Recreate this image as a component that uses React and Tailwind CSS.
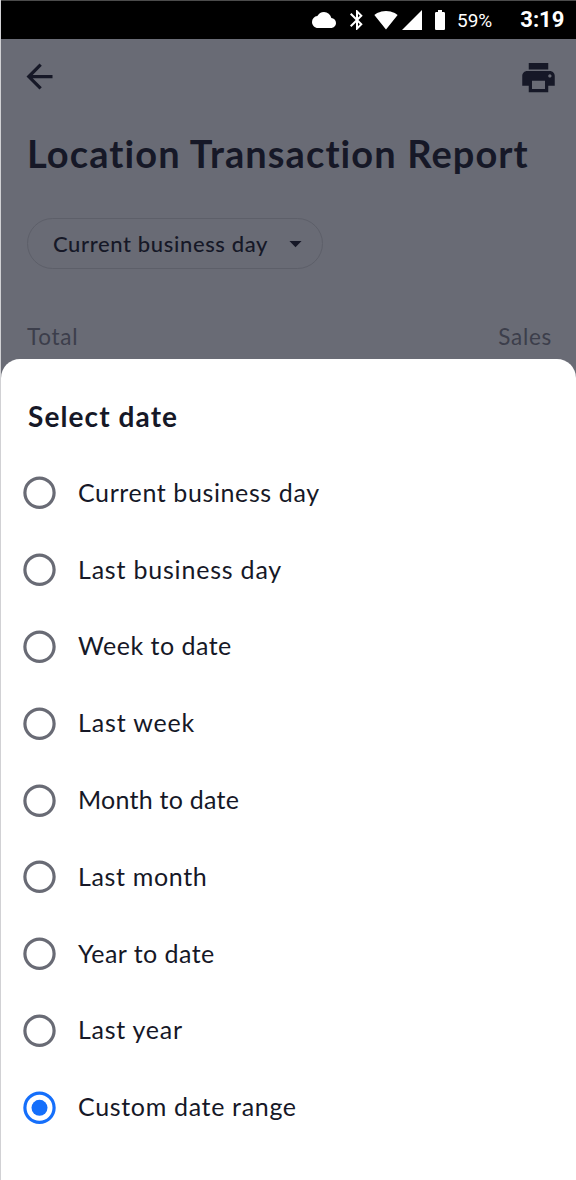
import React, { useState } from "react";
import clsx from "clsx";
import {
  MdArrowBack,
  MdArrowDropDown,
  MdBatteryFull,
  MdBluetooth,
  MdCloud,
  MdPrint,
  MdSignalCellular4Bar,
  MdSignalWifi4Bar,
} from "react-icons/md";

const options = [
  { label: "Current business day", tracking: "tracking-[0.61px]" },
  { label: "Last business day", tracking: "tracking-[0.8px]" },
  { label: "Week to date", tracking: "tracking-[0.5px]" },
  { label: "Last week", tracking: "tracking-[0.85px]" },
  { label: "Month to date", tracking: "tracking-[0.25px]" },
  { label: "Last month", tracking: "tracking-[0.66px]" },
  { label: "Year to date", tracking: "tracking-[0.45px]" },
  { label: "Last year", tracking: "tracking-[0.75px]" },
  { label: "Custom date range", tracking: "tracking-[0.67px]" },
];

function StatusBar() {
  return (
    <div className="flex h-[39px] items-center border-t border-[#4b4b4b] bg-black pl-[311px] font-[Roboto,sans-serif] text-white">
      <MdCloud className="size-6 shrink-0" />
      <MdBluetooth className="ml-[9px] size-6 shrink-0" />
      <MdSignalWifi4Bar className="ml-[5px] size-6 shrink-0" />
      <MdSignalCellular4Bar className="ml-[2px] size-6 shrink-0" />
      <MdBatteryFull className="ml-1 size-6 shrink-0" />
      <span className="ml-[5px] pt-px text-[19px] leading-none">59%</span>
      <span className="ml-[28px] text-[22px] leading-none font-bold">3:19</span>
    </div>
  );
}

function Report() {
  return (
    <div className="h-[320px] px-[26px] text-[#161827]">
      <div className="-mr-[8px] -ml-[7px] flex h-[76px] items-center justify-between">
        <MdArrowBack className="mb-[2px] size-[39px]" />
        <MdPrint className="size-[39px]" />
      </div>
      <h1 className="h-[76px] pt-[15px] text-[38px] leading-[46px] font-bold tracking-[1.09px] whitespace-nowrap">
        Location Transaction Report
      </h1>
      <button className="mt-[27px] flex h-[51px] w-[296px] items-center rounded-full border border-[#5d5f69] pl-[25px] text-[22px] font-medium whitespace-nowrap">
        <span className="w-[228px] text-left tracking-[0.63px]">
          Current business day
        </span>
        <MdArrowDropDown className="size-[29px]" />
      </button>
      <div className="mt-[54px] -mr-[2px] flex justify-between text-[22.5px] leading-[28px] tracking-[0.7px] text-[#3c3e4b]">
        <span>Total</span>
        <span>Sales</span>
      </div>
    </div>
  );
}

function Radio({ checked }) {
  return (
    <svg
      viewBox="0 0 34 34"
      className={clsx(
        "mt-px size-[34px] shrink-0",
        checked ? "text-[#156ffb]" : "text-[#696b75]"
      )}
    >
      <circle cx="16.5" cy="16.8" r="14.6" fill="none" stroke="currentColor" strokeWidth="3.2" />
      {checked && <circle cx="16.5" cy="16.8" r="8" fill="currentColor" />}
    </svg>
  );
}

export default function App() {
  const [selected, setSelected] = useState("Custom date range");

  return (
    <div className="h-[1180px] w-[576px] overflow-hidden border-l border-[#d1d1d4] bg-[#696b75] font-[Lato,sans-serif]">
      <StatusBar />
      <Report />
      <div className="h-[821px] rounded-t-[19px] bg-white text-[#161827]">
        <h2 className="h-[95.6px] pt-[39px] pl-[27px] text-[28px] leading-[36px] font-bold tracking-[1.1px]">
          Select date
        </h2>
        {options.map((option) => (
          <button
            key={option.label}
            onClick={() => setSelected(option.label)}
            className="flex h-[76.8px] w-full items-center gap-[21.5px] pl-[21.5px] text-[25px]"
          >
            <Radio checked={selected === option.label} />
            <span className={clsx("pb-px", option.tracking)}>{option.label}</span>
          </button>
        ))}
      </div>
    </div>
  );
}
